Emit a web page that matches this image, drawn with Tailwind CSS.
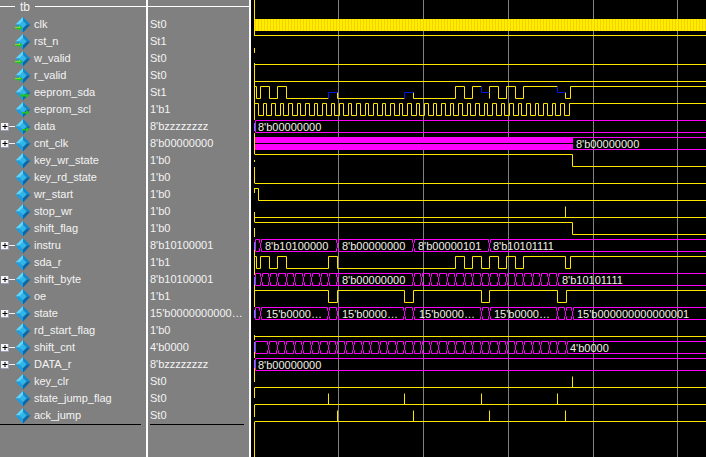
<!DOCTYPE html>
<html lang="en">
<head>
<meta charset="UTF-8">
<title>Wave</title>
<script src="https://cdn.jsdelivr.net/npm/@tailwindcss/browser@4"></script>
</head>
<body class="bg-black">
<svg width="0" height="0" class="absolute">
  <defs>
    <symbol id="dia" viewBox="0 0 16 16">
      <polygon points="8,0 0.500,7.500 4.500,7.500 8,4" fill="#5ad6ff"/>
      <polygon points="8,0 15.500,7.500 11.500,7.500 8,4" fill="#1288cc"/>
      <polygon points="0.500,7.500 8,15.500 8,11 4.500,7.500" fill="#1a9ee0"/>
      <polygon points="15.500,7.500 8,15.500 8,11 11.500,7.500" fill="#0a68a8"/>
      <polygon points="8,4 11.500,7.500 8,11 4.500,7.500" fill="#2cb8ee"/>
    </symbol>
    <symbol id="arrow-in" viewBox="0 0 16 16">
      <use href="#dia"/>
      <path d="M0 10h4V8l3.500 3-3.500 3v-2H0z" fill="#22c422"/>
      <path d="M0 10h4V9l1.500 1.500H0z" fill="#e6f03c"/>
    </symbol>
    <symbol id="arrow-out" viewBox="0 0 16 16">
      <use href="#dia"/>
      <path d="M7 10h4V8l3.500 2.500-3.500 2.500v-1.500H7z" fill="#22c422"/>
    </symbol>
    <symbol id="arrow-both" viewBox="0 0 16 16">
      <use href="#dia"/>
      <path d="M5 10.500l2.500-2.500v1.500h3.500v-1.500l3.500 2.500-3.500 2.500v-1.500h-3.500v1.500z" fill="#22c422"/>
    </symbol>
    <symbol id="plus" viewBox="0 0 15 9">
      <rect x="1" y="1" width="7.500" height="7.500" fill="#f4f4f8"/>
      <path d="M1 8.500h7.500V1" fill="none" stroke="#9aa0b8"/>
      <path d="M2.500 4.500h5M5 2v5" stroke="#000"/>
      <path d="M9 4.500h6" stroke="#f0f0f0"/>
    </symbol>
    <pattern id="clk" width="3" height="12" patternUnits="userSpaceOnUse">
      <rect width="3" height="12" fill="#ffee00"/>
      <rect width="1" height="12" fill="#f6cf00"/>
    </pattern>
  </defs>
</svg>

<div class="flex w-[706px] h-[457px] overflow-hidden font-['Liberation_Sans',sans-serif] text-[11px]">
  <!-- signal tree -->
  <div class="w-[148px] h-full shrink-0 bg-[#808080] border-r-2 border-white text-[#f4f4f4]">
    <div class="h-[16px] flex items-start">
      <div class="w-[15px] h-[1px] mt-[6px] bg-white"></div>
      <div class="w-[20px] text-center leading-[14px] text-[12px]">tb</div>
      <div class="flex-1 h-[1px] mt-[6px] bg-white"></div>
    </div>
    <div class="h-[17px] flex items-center pl-[15px] gap-[3px]"><svg class="w-[16px] h-[16px]"><use href="#arrow-in"/></svg>clk</div>
    <div class="h-[17px] flex items-center pl-[15px] gap-[3px]"><svg class="w-[16px] h-[16px]"><use href="#arrow-in"/></svg>rst_n</div>
    <div class="h-[17px] flex items-center pl-[15px] gap-[3px]"><svg class="w-[16px] h-[16px]"><use href="#arrow-in"/></svg>w_valid</div>
    <div class="h-[17px] flex items-center pl-[15px] gap-[3px]"><svg class="w-[16px] h-[16px]"><use href="#arrow-in"/></svg>r_valid</div>
    <div class="h-[17px] flex items-center pl-[15px] gap-[3px]"><svg class="w-[16px] h-[16px]"><use href="#arrow-both"/></svg>eeprom_sda</div>
    <div class="h-[17px] flex items-center pl-[15px] gap-[3px]"><svg class="w-[16px] h-[16px]"><use href="#arrow-out"/></svg>eeprom_scl</div>
    <div class="h-[17px] flex items-center"><svg class="w-[15px] h-[9px]"><use href="#plus"/></svg><svg class="w-[16px] h-[16px] mr-[3px]"><use href="#arrow-out"/></svg>data</div>
    <div class="h-[17px] flex items-center"><svg class="w-[15px] h-[9px]"><use href="#plus"/></svg><svg class="w-[16px] h-[16px] mr-[3px]"><use href="#dia"/></svg>cnt_clk</div>
    <div class="h-[17px] flex items-center pl-[15px] gap-[3px]"><svg class="w-[16px] h-[16px]"><use href="#dia"/></svg>key_wr_state</div>
    <div class="h-[17px] flex items-center pl-[15px] gap-[3px]"><svg class="w-[16px] h-[16px]"><use href="#dia"/></svg>key_rd_state</div>
    <div class="h-[17px] flex items-center pl-[15px] gap-[3px]"><svg class="w-[16px] h-[16px]"><use href="#dia"/></svg>wr_start</div>
    <div class="h-[17px] flex items-center pl-[15px] gap-[3px]"><svg class="w-[16px] h-[16px]"><use href="#dia"/></svg>stop_wr</div>
    <div class="h-[17px] flex items-center pl-[15px] gap-[3px]"><svg class="w-[16px] h-[16px]"><use href="#dia"/></svg>shift_flag</div>
    <div class="h-[17px] flex items-center"><svg class="w-[15px] h-[9px]"><use href="#plus"/></svg><svg class="w-[16px] h-[16px] mr-[3px]"><use href="#dia"/></svg>instru</div>
    <div class="h-[17px] flex items-center pl-[15px] gap-[3px]"><svg class="w-[16px] h-[16px]"><use href="#dia"/></svg>sda_r</div>
    <div class="h-[17px] flex items-center"><svg class="w-[15px] h-[9px]"><use href="#plus"/></svg><svg class="w-[16px] h-[16px] mr-[3px]"><use href="#dia"/></svg>shift_byte</div>
    <div class="h-[17px] flex items-center pl-[15px] gap-[3px]"><svg class="w-[16px] h-[16px]"><use href="#dia"/></svg>oe</div>
    <div class="h-[17px] flex items-center"><svg class="w-[15px] h-[9px]"><use href="#plus"/></svg><svg class="w-[16px] h-[16px] mr-[3px]"><use href="#dia"/></svg>state</div>
    <div class="h-[17px] flex items-center pl-[15px] gap-[3px]"><svg class="w-[16px] h-[16px]"><use href="#dia"/></svg>rd_start_flag</div>
    <div class="h-[17px] flex items-center"><svg class="w-[15px] h-[9px]"><use href="#plus"/></svg><svg class="w-[16px] h-[16px] mr-[3px]"><use href="#dia"/></svg>shift_cnt</div>
    <div class="h-[17px] flex items-center"><svg class="w-[15px] h-[9px]"><use href="#plus"/></svg><svg class="w-[16px] h-[16px] mr-[3px]"><use href="#dia"/></svg>DATA_r</div>
    <div class="h-[17px] flex items-center pl-[15px] gap-[3px]"><svg class="w-[16px] h-[16px]"><use href="#dia"/></svg>key_clr</div>
    <div class="h-[17px] flex items-center pl-[15px] gap-[3px]"><svg class="w-[16px] h-[16px]"><use href="#dia"/></svg>state_jump_flag</div>
    <div class="h-[17px] flex items-center pl-[15px] gap-[3px]"><svg class="w-[16px] h-[16px]"><use href="#dia"/></svg>ack_jump</div>
    <div class="w-[141px] h-[1px] bg-black"></div>
  </div>

  <!-- values -->
  <div class="w-[103px] h-full shrink-0 bg-[#808080] border-r-2 border-white text-[#f4f4f4]">
    <div class="h-[16px] flex items-start"><div class="flex-1 h-[1px] mt-[6px] bg-white"></div></div>
    <div class="pl-[2px] [&>div]:h-[17px] [&>div]:leading-[17px] [&>div]:whitespace-nowrap">
      <div>St0</div><div>St1</div><div>St0</div><div>St0</div><div>St1</div><div>1'b1</div>
      <div>8'bzzzzzzzz</div><div>8'b00000000</div><div>1'b0</div><div>1'b0</div><div>1'b0</div><div>1'b0</div>
      <div>1'b0</div><div>8'b10100001</div><div>1'b1</div><div>8'b10100001</div><div>1'b1</div><div>15'b0000000000…</div>
      <div>1'b0</div><div>4'b0000</div><div>8'bzzzzzzzz</div><div>St0</div><div>St0</div><div>St0</div>
    </div>
    <div class="w-[94px] h-[1px] ml-[2px] bg-black"></div>
  </div>

  <!-- waves; svg coordinates are shifted so x matches the screenshot -->
  <div class="flex-1 h-full bg-black">
    <svg id="waves" width="455" height="457" viewBox="251 0 455 457" class="block font-['Liberation_Sans',sans-serif] text-[11px]">
      <g stroke="#808080"><path d="M338.500 0V457M423.500 0V457M508.500 0V457M593.500 0V457M677.500 0V457"/></g>
      <rect x="255" y="19" width="451" height="12" fill="url(#clk)"/>
      <path id="logic" fill="none" stroke="#ffe600"/>
      <path id="tri" fill="none" stroke="#0018e0"/>
      <path id="bus" fill="none" stroke="#ff00ff"/>
      <rect x="255" y="137" width="318" height="13" fill="#ff00ff"/>
      <path d="M255 143.500H573" stroke="#000"/>
      <path id="cursor" fill="none" stroke="#ffe600"/>
      <path id="cursor2" fill="none" stroke="#12b4e8"/>
      <g fill="#f2f2e6" dominant-baseline="central">
        <text x="258" y="127">8'b00000000</text>
        <text x="576" y="144">8'b00000000</text>
        <text x="265" y="246">8'b10100000</text>
        <text x="342" y="246">8'b00000000</text>
        <text x="418" y="246">8'b00000101</text>
        <text x="493" y="246">8'b10101111</text>
        <text x="342" y="280">8'b00000000</text>
        <text x="562" y="280">8'b10101111</text>
        <text x="266" y="314">15'b0000…</text>
        <text x="342" y="314">15'b0000…</text>
        <text x="419" y="314">15'b0000…</text>
        <text x="494" y="314">15'b0000…</text>
        <text x="577" y="314">15'b000000000000001</text>
        <text x="570" y="348">4'b0000</text>
        <text x="258" y="365">8'b00000000</text>
      </g>
    </svg>
  </div>
</div>

<script>
  const END = 706;
  const hi = n => 18.5 + 17 * n;
  const lo = n => 30.5 + 17 * n;

  // single bit signal: edges toggle the level starting from `start`
  function bit(n, start, edges) {
    let level = start;
    let d = `M254.5 ${level ? hi(n) : lo(n)}`;
    for (const x of edges) {
      d += `H${x}`;
      level = !level;
      d += `V${level ? hi(n) : lo(n)}`;
    }
    return d + `H${END}`;
  }

  // bus signal: two rails, pinched to the middle at each transition
  function bus(n, start, edges, end) {
    const t = hi(n), b = lo(n);
    const stop = end || END;
    let d = `M${start} ${t}V${b}`;
    for (const x of edges) {
      for (const s of [x - 1, x + 1]) {
        d += `M${s} ${t}V${t + 3}L${x} ${t + 4}V${b - 4}L${s} ${b - 3}V${b}`;
      }
    }
    const xs = [start, ...edges, stop];
    for (let i = 0; i < xs.length - 1; i++) {
      const a = i === 0 ? xs[0] : xs[i] + 1;
      const e = i === xs.length - 2 ? xs[i + 1] : xs[i + 1] - 1;
      d += `M${a} ${t}H${e}M${a} ${b}H${e}`;
    }
    return d;
  }

  function steps(from, step, count) {
    const out = [];
    for (let i = 0; i < count; i++) out.push(Math.round(from + step * i) + 0.5);
    return out;
  }

  // eeprom_scl
  const scl = [];
  for (let m = 0; m <= 36; m++) {
    const f = 257.5 + 8.506 * m;
    scl.push(Math.round(f) + 0.5, Math.round(f + 5) + 0.5);
  }

  const pulses = (n, xs) => xs.map(x => `M${x} ${lo(n) - 11}V${lo(n)}`).join('');

  const logic = [
    `M254.5 ${hi(1)}H${END}`,                     // rst_n
    `M254.5 ${lo(2)}H${END}`,                     // w_valid
    `M254.5 ${lo(3)}H${END}`,                     // r_valid
    // eeprom_sda, the blue stretches are on the tri path
    `M255 ${hi(4)}H256.5V${lo(4)}H260.5V${hi(4)}H269.5V${lo(4)}H277.5V${hi(4)}H286.5V${lo(4)}H328.5`,
    `M337.5 92.5V${lo(4)}H404.5`,
    `M413.5 92.5V${lo(4)}H455.5V${hi(4)}H464.5V${lo(4)}H472.5V${hi(4)}H481.5`,
    `M489.5 ${lo(4)}V${hi(4)}H498.5V${lo(4)}H506.5V${hi(4)}H515.5V${lo(4)}H523.5V${hi(4)}H557.5`,
    `M565.5 92.5V${lo(4)}H570.5V${hi(4)}H${END}`,
    bit(5, true, scl),
    `M254.5 ${hi(8)}H572.5V${lo(8)}H${END}`,     // key_wr_state
    `M254.5 ${lo(9)}H${END}`,                     // key_rd_state
    `M254.5 ${hi(10)}H258.5V${lo(10)}H${END}`,  // wr_start
    `M254.5 ${lo(11)}H${END}` + pulses(11, [565.5]),
    `M254.5 ${hi(12)}H572.5V${lo(12)}H${END}`,  // shift_flag
    bit(14, true, [256.5, 260.5, 269.5, 277.5, 286.5, 328.5, 337.5, 455.5, 464.5, 472.5, 481.5, 489.5, 498.5, 506.5, 515.5, 523.5, 565.5, 570.5]),
    bit(16, true, [328.5, 337.5, 404.5, 413.5, 481.5, 489.5, 557.5, 566.5]),
    `M254.5 ${lo(18)}H${END}`,                   // rd_start_flag
    `M254.5 ${lo(21)}H${END}` + pulses(21, [572.5]),
    `M254.5 ${lo(22)}H${END}` + pulses(22, [328.5, 404.5, 481.5, 557.5]),
    `M254.5 ${lo(23)}H${END}` + pulses(23, [337.5, 413.5, 489.5, 565.5]),
  ].join('');
  document.getElementById('logic').setAttribute('d', logic);

  document.getElementById('tri').setAttribute('d',
    'M328.5 98.5V92.5H337.5M404.5 98.5V92.5H413.5M481.5 86.5V92.5H489.5M557.5 86.5V92.5H565.5');

  const buses = [
    bus(6, 255.5, []),
    `M255 ${hi(7)}H${END}M255 ${lo(7)}H${END}`,
    bus(13, 255.5, [260.5, 337.5, 413.5, 489.5]),
    bus(15, 255.5, [...steps(260.5, 8.467, 10), 337.5, ...steps(413, 8.467, 18)]),
    bus(17, 255.5, [260.5, 328.5, 337.5, 404.5, 413.5, 481.5, 489.5, 557.5, 565.5, 572.5]),
    bus(19, 255.5, steps(268, 8.5, 36)),
    bus(20, 255.5, []),
  ].join('');
  document.getElementById('bus').setAttribute('d', buses);

  document.getElementById('cursor').setAttribute('d',
    'M254.5 0V36M254.5 48V53M254.5 63V103M254.5 103V120M254.5 133V154M254.5 160V162M254.5 167V183M254.5 188V193M254.5 212V222M254.5 228V237M254.5 250V275M254.5 285V307M254.5 335V340M254.5 352V358M254.5 368V382M254.5 388V398M254.5 405V417M254.5 422V457');
  document.getElementById('cursor2').setAttribute('d',
    'M254.5 123V131M254.5 242V250M254.5 277V285M254.5 310V318M254.5 342V352M254.5 360V368');
</script>
</body>
</html>
